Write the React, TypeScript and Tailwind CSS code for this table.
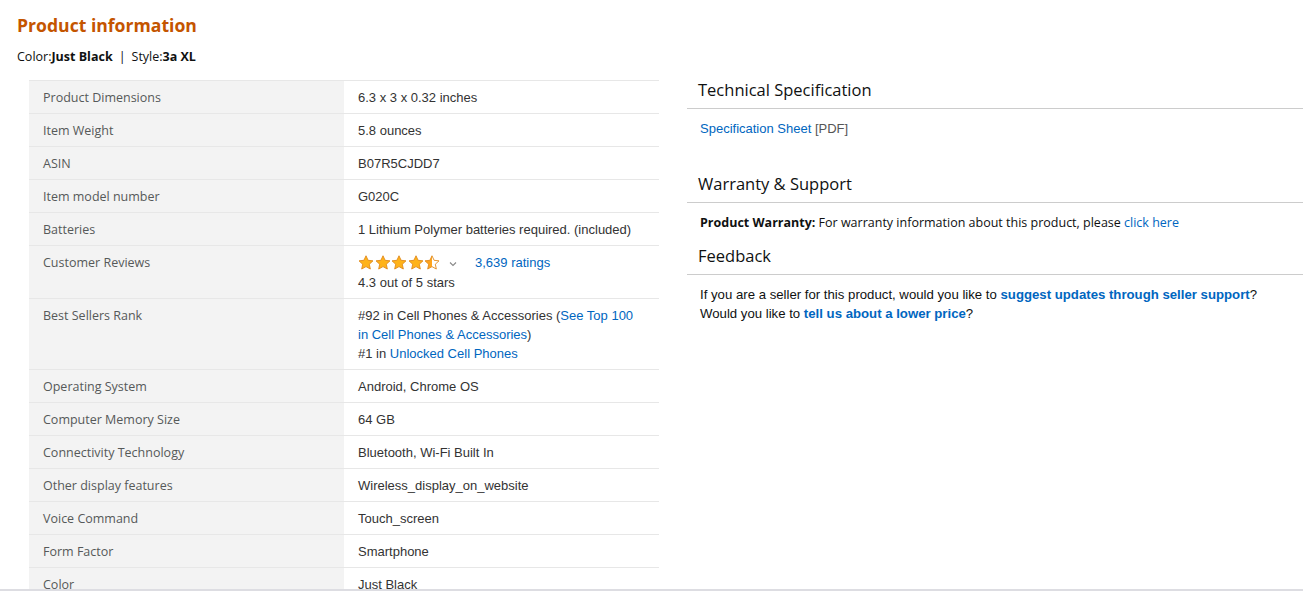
import { ReactNode } from 'react'

const Star = ({ fill }: { fill: 'full' | 'half' }) => (
  <svg width="16" height="15" viewBox="0 0 24 23">
    <defs>
      <linearGradient id="half">
        <stop offset="50%" stopColor="#ffa41c" />
        <stop offset="50%" stopColor="#ffffff" />
      </linearGradient>
    </defs>
    <path
      d="M12 1.2l3.2 6.9 7.5.9-5.6 5.1 1.5 7.4L12 17.8l-6.6 3.7 1.5-7.4L1.3 9l7.5-.9z"
      fill={fill === 'full' ? '#ffb31a' : 'url(#half)'}
      stroke="#e08a1e"
      strokeWidth="1.4"
      strokeLinejoin="round"
    />
  </svg>
)

const Link = ({ children, bold }: { children: ReactNode; bold?: boolean }) => (
  <span className={bold ? 'font-semibold text-[#0066c0]' : 'text-[#0066c0]'}>{children}</span>
)

const rows: { label: string; value: ReactNode }[] = [
  { label: 'Product Dimensions', value: '6.3 x 3 x 0.32 inches' },
  { label: 'Item Weight', value: '5.8 ounces' },
  { label: 'ASIN', value: 'B07R5CJDD7' },
  { label: 'Item model number', value: 'G020C' },
  { label: 'Batteries', value: '1 Lithium Polymer batteries required. (included)' },
  {
    label: 'Customer Reviews',
    value: (
      <div>
        <div className="flex h-[19px] items-center">
          <div className="flex gap-[0.5px]">
            <Star fill="full" />
            <Star fill="full" />
            <Star fill="full" />
            <Star fill="full" />
            <Star fill="half" />
          </div>
          <svg width="8" height="6" viewBox="0 0 8 6" className="ml-[9px] mt-[2px]">
            <path d="M1 1.5l3 3 3-3" fill="none" stroke="#888" strokeWidth="1.1" />
          </svg>
          <span className="ml-[18px]"><Link>3,639 ratings</Link></span>
        </div>
        <div className="mt-[1px]">4.3 out of 5 stars</div>
      </div>
    ),
  },
  {
    label: 'Best Sellers Rank',
    value: (
      <div>
        #92 in Cell Phones &amp; Accessories (<Link>See Top 100 in Cell Phones &amp; Accessories</Link>)
        <br />
        #1 in <Link>Unlocked Cell Phones</Link>
      </div>
    ),
  },
  { label: 'Operating System', value: 'Android, Chrome OS' },
  { label: 'Computer Memory Size', value: '64 GB' },
  { label: 'Connectivity Technology', value: 'Bluetooth, Wi-Fi Built In' },
  { label: 'Other display features', value: 'Wireless_display_on_website' },
  { label: 'Voice Command', value: 'Touch_screen' },
  { label: 'Form Factor', value: 'Smartphone' },
  { label: 'Color', value: 'Just Black' },
]

const Heading = ({ children }: { children: ReactNode }) => (
  <h2 className="border-b border-[#cccccc] pb-[6px] pl-[11px] text-[16.5px] leading-[24px] text-[#0f1111] [font-family:'Open_Sans',sans-serif]">
    {children}
  </h2>
)

export default function App() {
  return (
    <div className="h-[591px] overflow-hidden border-b-2 border-[#dddde2] bg-white text-[#0f1111] [font-family:'Liberation_Sans',Arial,sans-serif]">
      <div className="pl-[17px] pt-[13px]">
        <h1 className="text-[17.6px] font-bold leading-[24px] text-[#c45500] [font-family:'Open_Sans',sans-serif]">
          Product information
        </h1>
        <p className="mt-[11px] text-[12.5px] leading-[18px] [font-family:'Open_Sans',sans-serif]">
          Color:<b>Just Black</b>
          <span className="mx-[6px]">|</span>
          Style:<b>3a XL</b>
        </p>
      </div>
      <div className="mt-[14px] flex items-start">
        <table className="ml-[29px] w-[630px] border-collapse text-[13px] leading-[19px]">
          <tbody>
            {rows.map((r) => (
              <tr key={r.label} className="border-t border-[#e7e7e7]">
                <th className="w-[315px] bg-[#f3f3f3] px-[14px] pt-[7px] pb-[6px] text-left align-top text-[12.5px] font-normal text-[#565959] [font-family:'Open_Sans',sans-serif]">
                  {r.label}
                </th>
                <td className="px-[14px] pt-[7px] pb-[6px] align-top text-[#333]">{r.value}</td>
              </tr>
            ))}
          </tbody>
        </table>
        <div className="-mt-[2px] ml-[28px] flex-1">
          <Heading>Technical Specification</Heading>
          <p className="mt-[10px] pl-[13px] text-[13px] leading-[19px]">
            <Link>Specification Sheet</Link> <span className="text-[#555]">[PDF]</span>
          </p>
          <div className="mt-[34px]">
            <Heading>Warranty &amp; Support</Heading>
          </div>
          <p className="mt-[10px] pl-[13px] text-[12.5px] leading-[19px] [font-family:'Open_Sans',sans-serif]">
            <b>Product Warranty:</b> For warranty information about this product, please <Link>click here</Link>
          </p>
          <div className="mt-[12px]">
            <Heading>Feedback</Heading>
          </div>
          <p className="mt-[10px] pl-[13px] text-[13.2px] leading-[19px]">
            If you are a seller for this product, would you like to <Link bold>suggest updates through seller support</Link>?
            <br />
            Would you like to <Link bold>tell us about a lower price</Link>?
          </p>
        </div>
      </div>
    </div>
  )
}
